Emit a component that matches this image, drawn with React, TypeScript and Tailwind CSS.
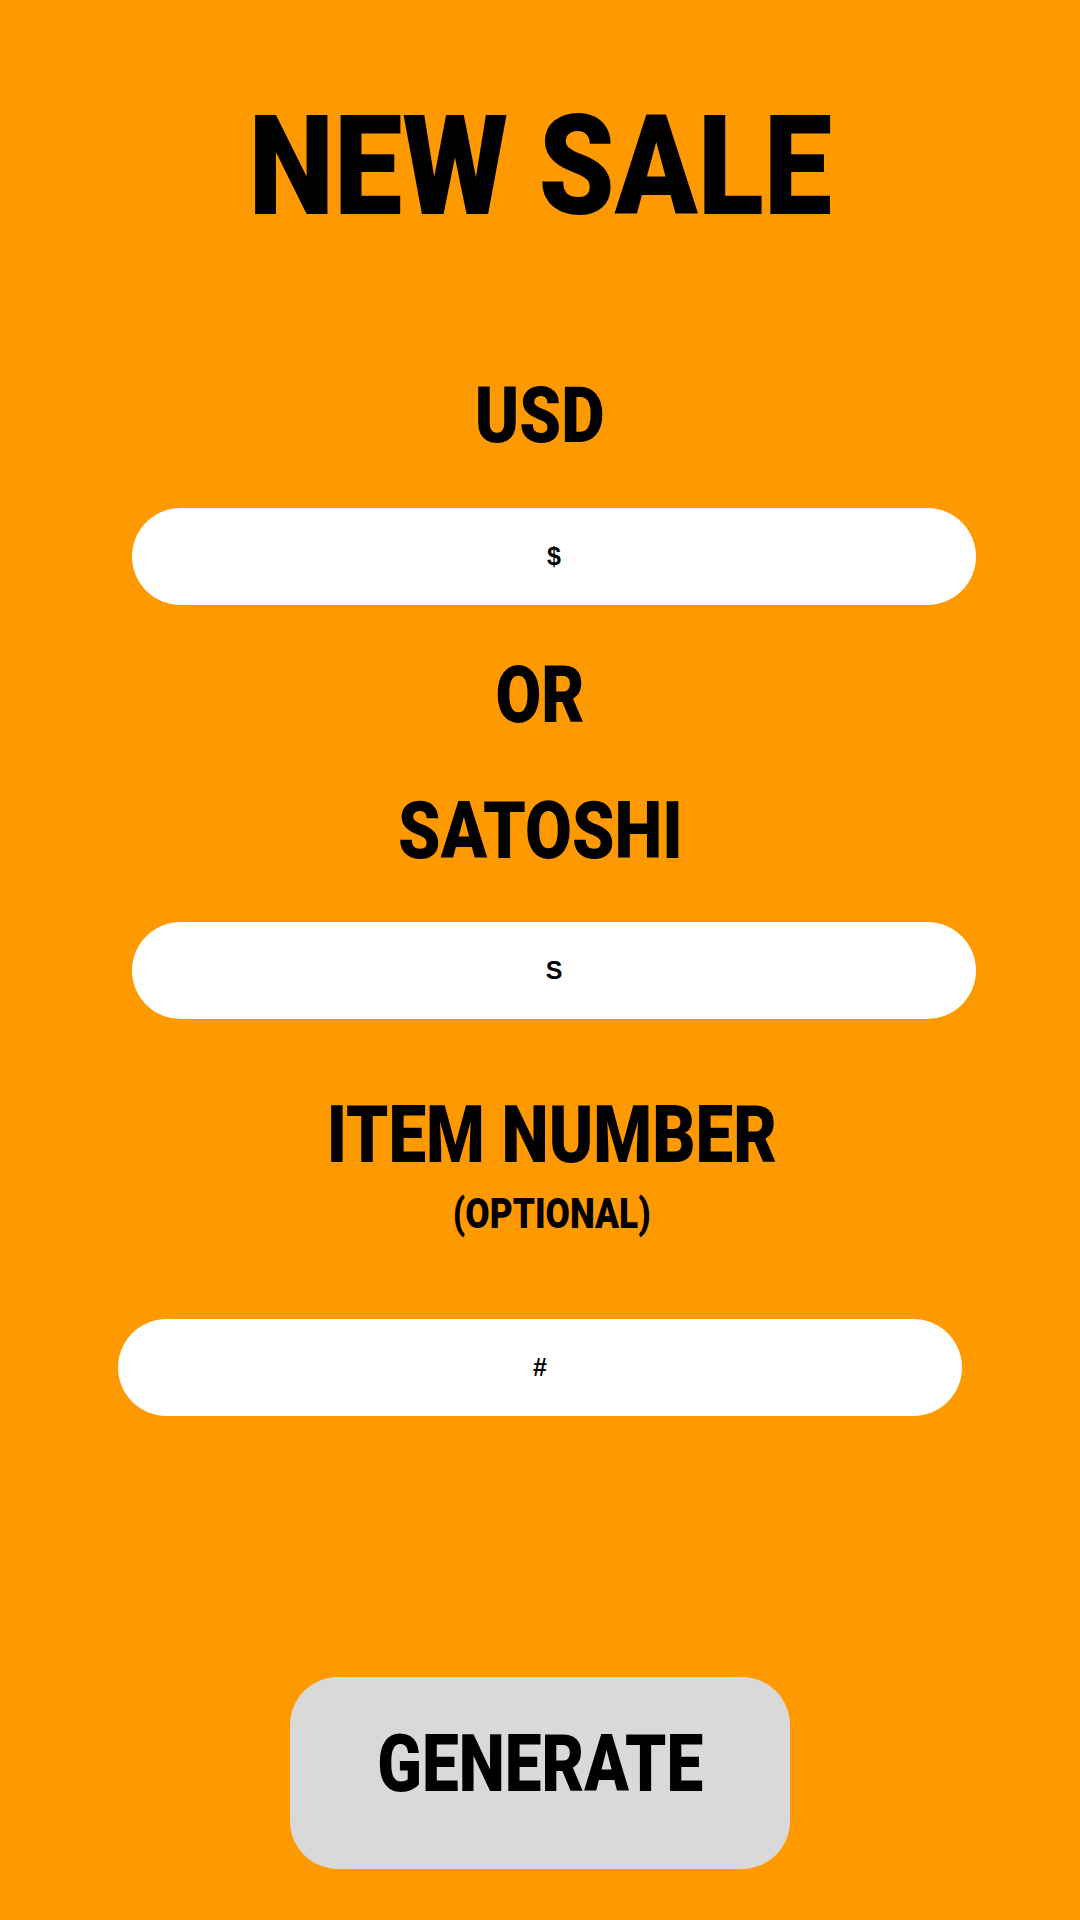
import React from "react";

const F = { fontFamily: "Roboto, 'Liberation Sans', sans-serif" };

function Label({ className, scale, children }: { className: string; scale: string; children: React.ReactNode }) {
  return (
    <div className={"leading-none font-black text-black text-center whitespace-nowrap " + className} style={F}>
      <span className={"inline-block origin-center " + scale}>{children}</span>
    </div>
  );
}

function Field({ placeholder, className }: { placeholder: string; className: string }) {
  return (
    <input
      placeholder={placeholder}
      className={
        "block h-[97px] w-[844px] rounded-full bg-white text-center text-[25px] font-bold text-black placeholder:text-black outline-none " +
        className
      }
      style={{ fontFamily: "'Liberation Sans', Arial, sans-serif" }}
    />
  );
}

export default function App() {
  return (
    <div className="w-[1080px] h-[1920px] bg-[#ff9900] flex flex-col items-center pt-[96px] overflow-hidden">
      <Label className="text-[140px]" scale="scale-x-[0.87]">NEW SALE</Label>
      <Label className="text-[77px] mt-[142px]" scale="scale-x-[0.87]">USD</Label>
      <Field placeholder="$" className="mt-[53px] translate-x-[14px]" />
      <Label className="text-[79px] mt-[51px]" scale="scale-x-[0.84]">OR</Label>
      <Label className="text-[80px] mt-[56px]" scale="scale-x-[0.85]">SATOSHI</Label>
      <Field placeholder="S" className="mt-[51px] h-[94px] translate-x-[14px]" />
      <div className="flex flex-col items-center translate-x-[12px]">
        <Label className="text-[79px] mt-[77px]" scale="scale-x-[0.85]">ITEM NUMBER</Label>
        <Label className="text-[42px] mt-[18px]" scale="scale-x-[0.84]">(OPTIONAL)</Label>
      </div>
      <Field placeholder="#" className="mt-[84px]" />
      <button className="mt-[261px] w-[500px] h-[192px] rounded-[48px] bg-[#d9d9d9] flex flex-col items-center pt-[48px]">
        <Label className="text-[79px]" scale="scale-x-[0.83]">GENERATE</Label>
      </button>
    </div>
  );
}
